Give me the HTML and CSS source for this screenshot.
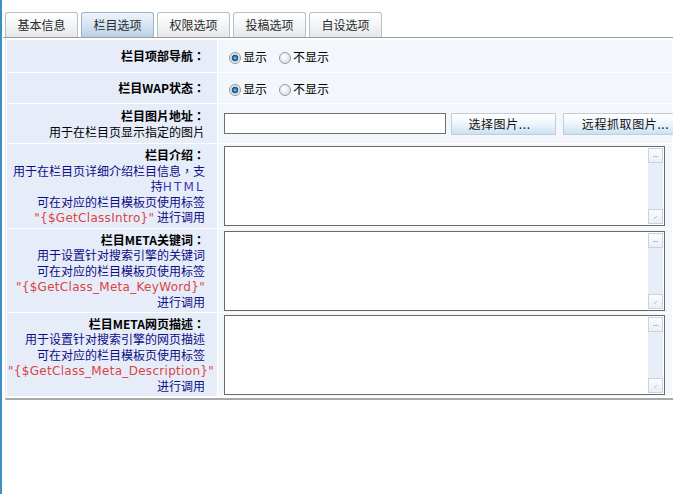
FILE: index.html
```html
<!DOCTYPE html>
<html>
<head>
<meta charset="utf-8">
<title>栏目选项</title>
<link rel="stylesheet" href="styles.css">
</head>
<body>
<div class="page">
  <div class="edge"></div>
  <div class="main">
    <div class="tabs">
      <div class="tab">基本信息</div>
      <div class="tab active">栏目选项</div>
      <div class="tab">权限选项</div>
      <div class="tab">投稿选项</div>
      <div class="tab">自设选项</div>
    </div>
    <div class="panel">
      <table class="form">
        <colgroup><col class="c-label"><col></colgroup>
        <tr class="r1">
          <td class="label"><div class="t">栏目项部导航：</div></td>
          <td class="value">
            <label class="opt"><span class="radio on"></span>显示</label><label class="opt"><span class="radio"></span>不显示</label>
          </td>
        </tr>
        <tr class="r2">
          <td class="label"><div class="t">栏目WAP状态：</div></td>
          <td class="value">
            <label class="opt"><span class="radio on"></span>显示</label><label class="opt"><span class="radio"></span>不显示</label>
          </td>
        </tr>
        <tr class="r3">
          <td class="label"><div class="t">栏目图片地址：</div><div class="d black">用于在栏目页显示指定的图片</div></td>
          <td class="value nowrap">
            <input class="text" type="text"><button class="btn b1">选择图片...</button><button class="btn b2">远程抓取图片...</button>
          </td>
        </tr>
        <tr class="r4">
          <td class="label"><div class="t">栏目介绍：</div><div class="d">用于在栏目页详细介绍栏目信息，支<br>持<span class="html">HTML</span><br>可在对应的栏目模板页使用标签<br><span class="tag">"{$GetClassIntro}"</span> 进行调用</div></td>
          <td class="value">
            <div class="ta"><textarea class="ta-input"></textarea><div class="sb"><div class="sb-btn"><svg width="13" height="13" viewBox="0 0 13 13"><path d="M4 7.5h5" stroke="#b4bcc6" stroke-width="1"/></svg></div><div class="sb-track"></div><div class="sb-btn"><svg width="13" height="13" viewBox="0 0 13 13"><path d="M5 9l3-3" stroke="#b4bcc6" stroke-width="1"/></svg></div></div></div>
          </td>
        </tr>
        <tr class="r5">
          <td class="label"><div class="t">栏目META关键词：</div><div class="d">用于设置针对搜索引擎的关键词<br>可在对应的栏目模板页使用标签<br><span class="tag">"{$GetClass_Meta_KeyWord}"</span><br>进行调用</div></td>
          <td class="value">
            <div class="ta"><textarea class="ta-input"></textarea><div class="sb"><div class="sb-btn"><svg width="13" height="13" viewBox="0 0 13 13"><path d="M4 7.5h5" stroke="#b4bcc6" stroke-width="1"/></svg></div><div class="sb-track"></div><div class="sb-btn"><svg width="13" height="13" viewBox="0 0 13 13"><path d="M5 9l3-3" stroke="#b4bcc6" stroke-width="1"/></svg></div></div></div>
          </td>
        </tr>
        <tr class="r6">
          <td class="label"><div class="t">栏目META网页描述：</div><div class="d">用于设置针对搜索引擎的网页描述<br>可在对应的栏目模板页使用标签<br><span class="tag">"{$GetClass_Meta_Description}"</span><br>进行调用</div></td>
          <td class="value">
            <div class="ta"><textarea class="ta-input"></textarea><div class="sb"><div class="sb-btn"><svg width="13" height="13" viewBox="0 0 13 13"><path d="M4 7.5h5" stroke="#b4bcc6" stroke-width="1"/></svg></div><div class="sb-track"></div><div class="sb-btn"><svg width="13" height="13" viewBox="0 0 13 13"><path d="M5 9l3-3" stroke="#b4bcc6" stroke-width="1"/></svg></div></div></div>
          </td>
        </tr>
      </table>
    </div>
  </div>
</div>
</body>
</html>
```

FILE: styles.css
```css
html, body {
  margin: 0;
  padding: 0;
  background: #ffffff;
  overflow: hidden;
}
body {
  font-family: "Noto Sans CJK SC", "Liberation Sans", sans-serif;
  font-size: 12px;
  color: #000;
}
.page {
  display: flex;
  min-height: 100vh;
}
.edge {
  flex: none;
  width: 2px;
  background: #3d8dc6;
}
.main {
  flex: 1;
  min-width: 0;
  padding-left: 1px;
}
.tabs {
  display: flex;
  gap: 3px;
  margin-top: 12px;
  padding-left: 2px;
  border-bottom: 1px solid #9c9c9c;
}
.tab {
  box-sizing: border-box;
  width: 73px;
  height: 25px;
  border: 1px solid #b9bfc6;
  border-bottom: none;
  border-radius: 3px 3px 0 0;
  background: linear-gradient(#ffffff, #f3f5f7 50%, #e3e7eb);
  color: #2a2a2a;
  text-align: center;
  line-height: 23px;
}
.tab.active {
  border-color: #9fb3c7;
  background: linear-gradient(#eef4fa, #d6e4f2 50%, #b9d0e7);
}
.panel {
  margin-left: 2px;
  border-left: 1px solid #e8e8e8;
  padding: 1px 0 1px 0;
  border-bottom: 2px solid #a8a8a8;
}
.form {
  width: 100%;
  table-layout: fixed;
  border-collapse: separate;
  border-spacing: 1px;
}
.c-label {
  width: 210px;
}
.form td {
  padding: 0;
  vertical-align: middle;
}
.label {
  background: #e7edf8;
  text-align: right;
  padding: 0 12px 0 1px !important;
  line-height: 15.4px;
  font-family: "Noto Sans CJK TC", "Noto Sans CJK SC", sans-serif;
}
.value {
  background: #f3f7fc;
  padding-left: 6px !important;
}
.nowrap {
  white-space: nowrap;
}
.r1 td { height: 32px; }
.r2 td { height: 30px; }
.r3 td { height: 39px; }
.r4 td { height: 84px; }
.r5 td { height: 83px; }
.r6 td { height: 83px; }

.t {
  font-weight: bold;
  color: #000;
}
.d {
  color: #0c0c86;
}
.d.black {
  color: #000;
}
.html {
  font-family: "DejaVu Sans", sans-serif;
  font-size: 12px;
  letter-spacing: 2.2px;
  line-height: 12px;
  color: #3a3ac0;
}
.tag {
  font-family: "DejaVu Sans", sans-serif;
  letter-spacing: 0.3px;
  line-height: 12px;
  color: #d94444;
  white-space: nowrap;
}

.opt {
  display: inline-block;
  margin-right: 7px;
  line-height: 16px;
}
.radio {
  display: inline-block;
  box-sizing: border-box;
  width: 12px;
  height: 12px;
  margin: 0 2px 0 5px;
  vertical-align: -2px;
  border: 1px solid #8e9ba8;
  border-radius: 50%;
  background: radial-gradient(circle at 40% 35%, #ffffff 0, #eef0f2 40%, #cfd5db 100%);
}
.radio.on {
  background: radial-gradient(circle at 50% 50%, #8fd0f0 0, #2f7fbc 1.6px, #14507f 3px, #d8dde2 3.6px, #f2f4f6 6px);
}

.text {
  box-sizing: border-box;
  width: 222px;
  height: 21px;
  margin: 0;
  vertical-align: middle;
  border: 1px solid #6f6f6f;
  background: #fff;
  padding: 0 2px;
  font: inherit;
}
.btn {
  box-sizing: border-box;
  height: 22px;
  margin: 0 0 0 5px;
  padding: 0;
  vertical-align: middle;
  border: 1px solid #c3cdd8;
  background: linear-gradient(#ffffff, #f1f6fb 45%, #cae1f4);
  font-family: "Noto Sans CJK SC", sans-serif;
  font-size: 12px;
  letter-spacing: 0.6px;
  color: #111;
  line-height: 20px;
}
.b1 { width: 105px; padding-right: 8px; }
.b2 { width: 125px; margin-left: 7px; }

.ta {
  box-sizing: border-box;
  display: flex;
  width: 441px;
  height: 80px;
  border: 1px solid #6a6a6a;
  background: #ffffff;
}
.ta-input {
  flex: 1;
  min-width: 0;
  margin: 0;
  border: none;
  padding: 2px;
  resize: none;
  outline: none;
  background: transparent;
  font: inherit;
}
.sb {
  flex: none;
  width: 15px;
  margin: 1px 1px 1px 0;
  display: flex;
  flex-direction: column;
  background: #e6eef9;
}
.sb-btn {
  box-sizing: border-box;
  height: 15px;
  border: 1px solid #c9d2dd;
  background: linear-gradient(#fbfcfe, #eaeff6);
  display: flex;
  align-items: center;
  justify-content: center;
}
.sb-btn svg {
  display: block;
}
.sb-track {
  flex: 1;
}
```
